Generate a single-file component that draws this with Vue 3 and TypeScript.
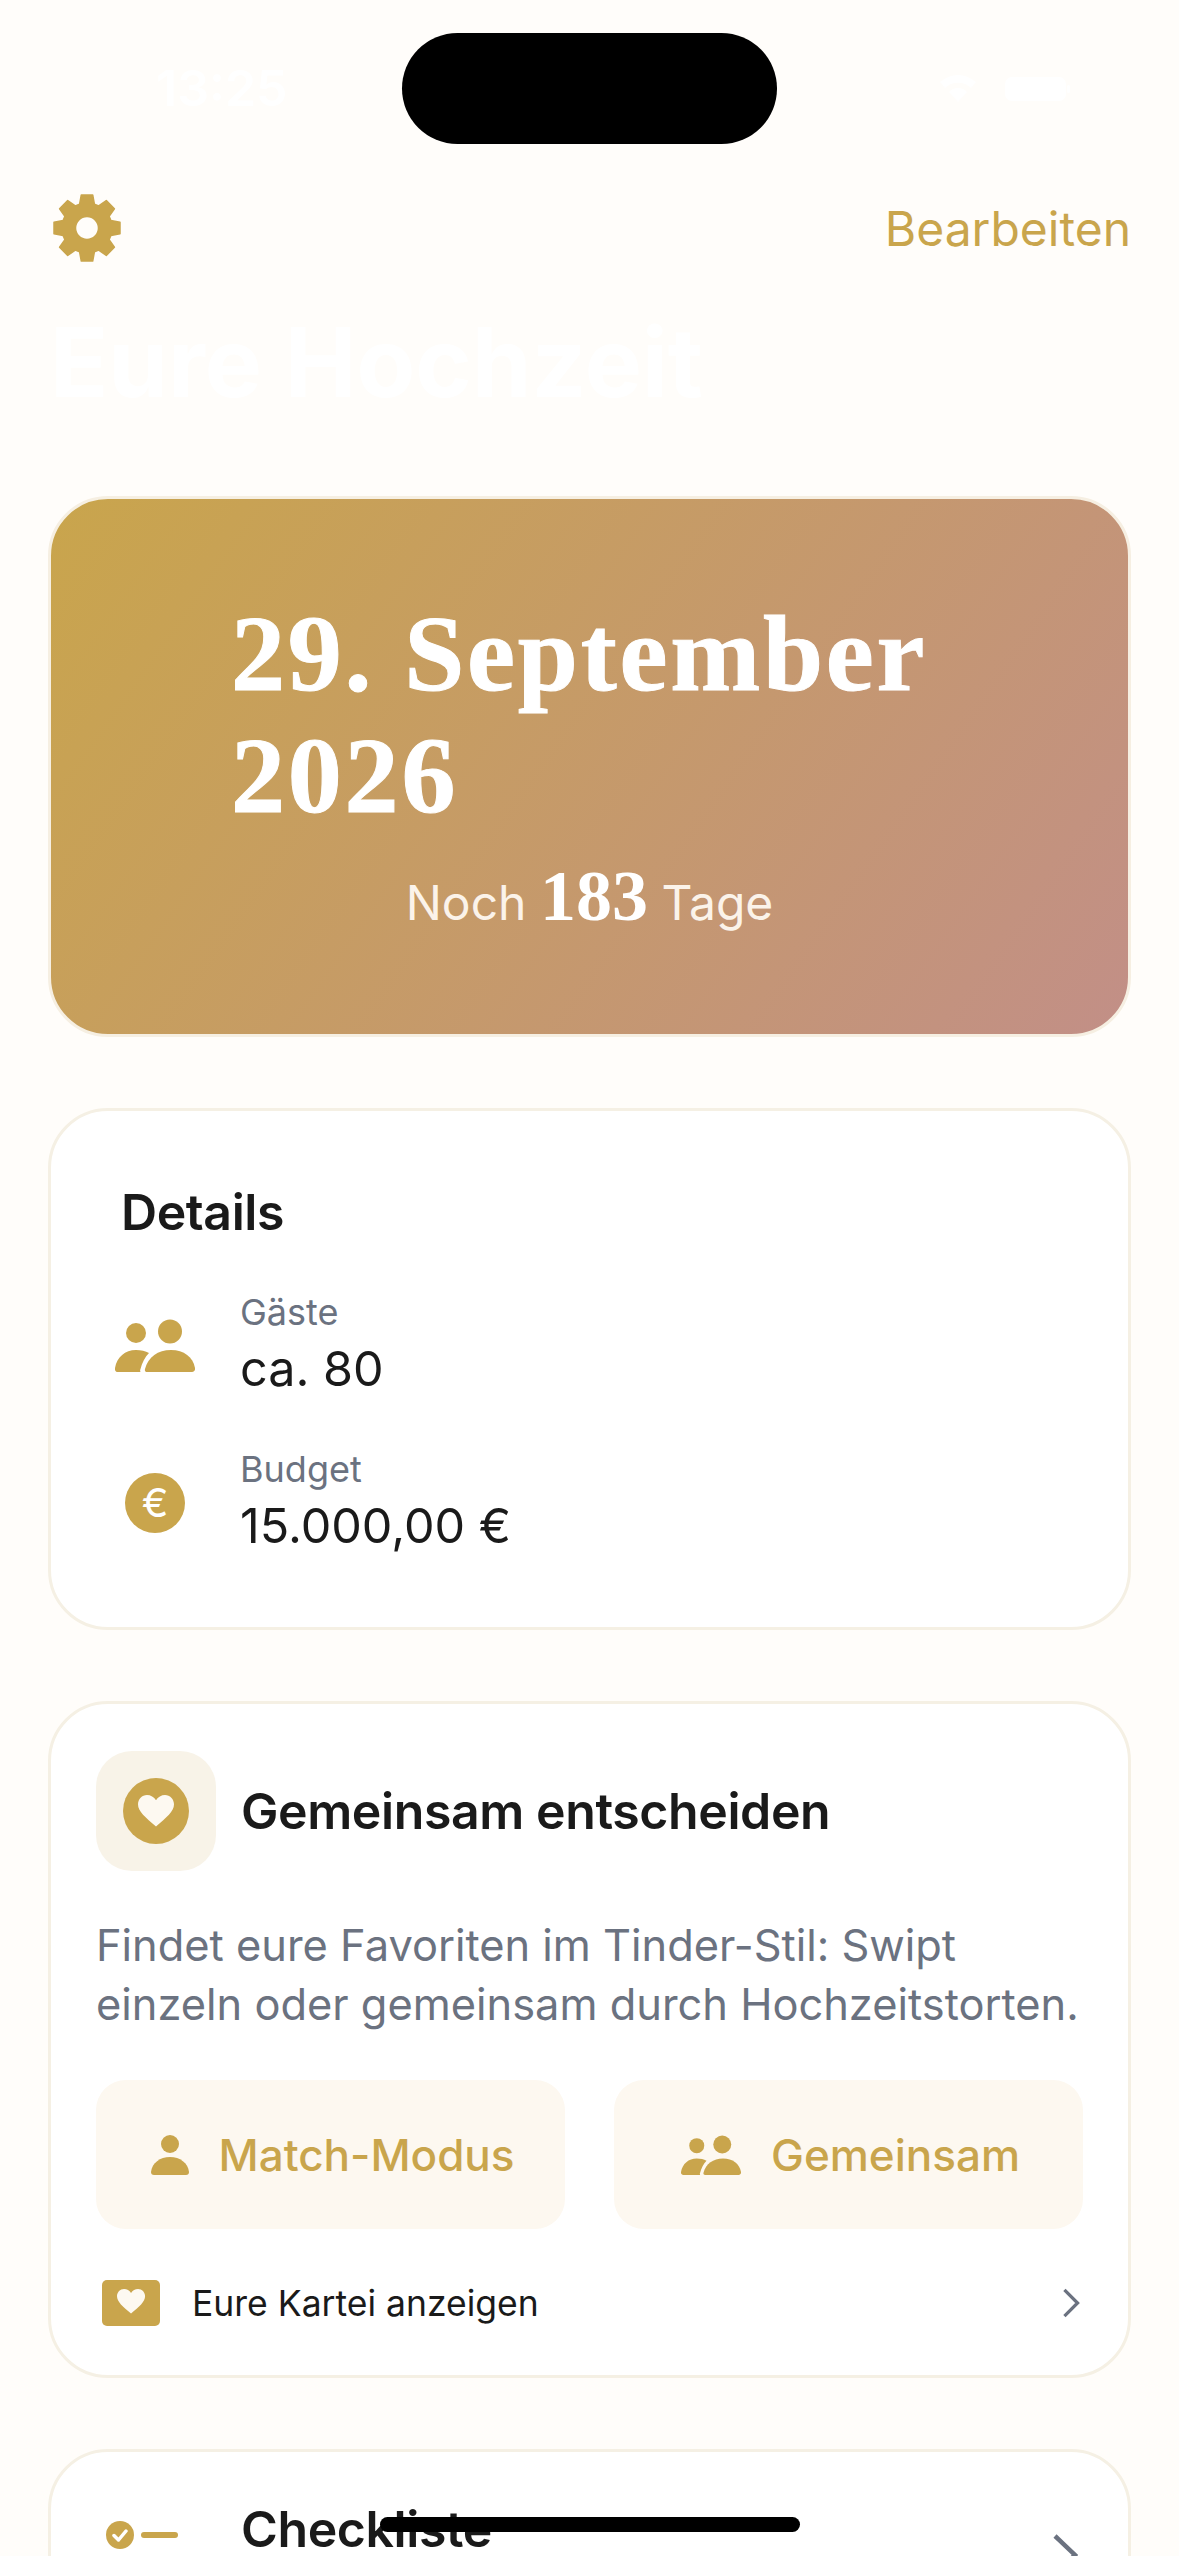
<template>
  <div class="screen">
    <!-- Statusleiste -->
    <div class="status-bar">
      <span class="status-time">13:25</span>
      <svg class="status-right" viewBox="0 0 130 30" aria-hidden="true">
        <path d="M0 8a27 27 0 0 1 36 0l-5 6a19 19 0 0 0-26 0ZM9 18a12 12 0 0 1 18 0l-9 10Z" />
        <rect x="65" y="3" width="61" height="24" rx="7" />
        <rect x="127" y="11" width="3" height="8" rx="1.5" />
      </svg>
    </div>
    <div class="island" />

    <div class="nav">
      <svg class="gear" viewBox="0 0 68 68" aria-hidden="true">
        <path :d="gearPath" fill-rule="evenodd" />
      </svg>
      <span class="edit">Bearbeiten</span>
    </div>

    <h1 class="page-title">Eure Hochzeit</h1>

    <section class="hero">
      <div class="hero-date">29. September 2026</div>
      <div class="hero-count">Noch <strong>183</strong> Tage</div>
    </section>

    <section class="card details">
      <h2>Details</h2>
      <div class="detail-row">
        <svg class="detail-icon" viewBox="0 0 80 53" aria-hidden="true">
          <circle cx="21" cy="14" r="10" />
          <circle cx="55" cy="12.5" r="12" />
          <path d="M3 53C.5 53-.5 51 0 49 2 38 10 31 21 31c5 0 9.500 1 13 3-4 4-7 10-8.500 16-.5 1-.5 2 0 3Z" />
          <path d="M32 53c-1.500 0-2.500-1-2-3 3-12 13-19 26-19s22 7 24 18c.4 2.500-1 4-3 4Z" />
        </svg>
        <div>
          <div class="detail-label">Gäste</div>
          <div class="detail-value">ca. 80</div>
        </div>
      </div>
      <div class="detail-row">
        <div class="detail-icon euro">€</div>
        <div>
          <div class="detail-label">Budget</div>
          <div class="detail-value">15.000,00 €</div>
        </div>
      </div>
    </section>

    <section class="card decide">
      <div class="decide-head">
        <div class="decide-icon">
          <svg viewBox="0 0 66 66" aria-hidden="true">
            <circle cx="33" cy="33" r="33" />
            <path class="white" :d="heartPath" transform="translate(15 17) scale(1.5)" />
          </svg>
        </div>
        <h2>Gemeinsam entscheiden</h2>
      </div>
      <p class="decide-text">
        Findet eure Favoriten im Tinder-Stil: Swipt einzeln oder gemeinsam durch Hochzeitstorten.
      </p>
      <div class="decide-buttons">
        <button class="mode-btn">
          <svg class="person" viewBox="0 0 38 40" aria-hidden="true">
            <circle cx="19" cy="9" r="9" />
            <path d="M3 40c-2 0-3-1-3-3 1-9 9-15 19-15s18 6 19 15c0 2-1 3-3 3Z" />
          </svg>
          Match-Modus
        </button>
        <button class="mode-btn">
          <svg class="people" viewBox="0 0 80 53" aria-hidden="true">
            <circle cx="21" cy="14" r="10" />
            <circle cx="55" cy="12.500" r="12" />
            <path d="M3 53C.5 53-.5 51 0 49 2 38 10 31 21 31c5 0 9.500 1 13 3-4 4-7 10-8.500 16-.5 1-.5 2 0 3Z" />
            <path d="M32 53c-1.500 0-2.500-1-2-3 3-12 13-19 26-19s22 7 24 18c.4 2.500-1 4-3 4Z" />
          </svg>
          Gemeinsam
        </button>
      </div>
      <div class="kartei">
        <svg class="kartei-icon" viewBox="0 0 58 46" aria-hidden="true">
          <rect width="58" height="46" rx="5" />
          <path class="white" :d="heartPath" transform="translate(15 9) scale(1.17)" />
        </svg>
        <span>Eure Kartei anzeigen</span>
        <svg class="chevron" viewBox="0 0 20 32" aria-hidden="true">
          <path d="M3 2l14 14L3 30" />
        </svg>
      </div>
    </section>

    <section class="card checklist">
      <div class="check-icon">
        <svg viewBox="0 0 72 28" aria-hidden="true">
          <circle cx="14" cy="14" r="14" />
          <path class="tick" d="M8 14.500l4.500 4.500L20 10" />
          <rect x="35" y="11" width="37" height="6" rx="3" />
        </svg>
      </div>
      <h2>Checkliste</h2>
      <svg class="chevron big" viewBox="0 0 26 44" aria-hidden="true">
        <path d="M3 3l20 19L3 41" />
      </svg>
    </section>

    <div class="home-indicator" />
  </div>
</template>

<script setup lang="ts">
// Zahnrad aus 8 Zähnen plus Loch in der Mitte
const buildGear = (): string => {
  const pts: string[] = []
  const cx = 34
  const cy = 34
  for (let i = 0; i < 8; i++) {
    const a = (i * Math.PI) / 4 - Math.PI / 2
    const corners: [number, number][] = [
      [25, -0.3],
      [33.5, -0.17],
      [33.5, 0.17],
      [25, 0.3]
    ]
    for (const [r, d] of corners) {
      pts.push(`${(cx + r * Math.cos(a + d)).toFixed(1)} ${(cy + r * Math.sin(a + d)).toFixed(1)}`)
    }
  }
  const hole = 'M45.500 34a11.500 11.500 0 1 0-23 0a11.500 11.500 0 1 0 23 0Z'
  return `M${pts.join('L')}Z${hole}`
}

const gearPath = buildGear()
const heartPath = 'M12 21C5 15 0 11 0 6.200 0 2.700 2.700 0 6 0c2.400 0 4.700 1.300 6 3.500C13.300 1.300 15.600 0 18 0c3.300 0 6 2.700 6 6.200C24 11 19 15 12 21Z'
</script>

<style>
html,
body {
  margin: 0;
  overflow: hidden;
  background: #fffdfa;
}
</style>

<style scoped>
.screen {
  position: relative;
  height: 2556px;
  overflow: hidden;
  box-sizing: border-box;
  padding: 0 48px;
  background: #fffdfa;
  font-family: Inter, "Noto Sans", sans-serif;
  color: #1a1a1a;
}

.status-bar {
  height: 180px;
  display: flex;
  justify-content: space-between;
  padding: 58px 61px 0 108px;
  box-sizing: border-box;
  color: #ffffff;
  font-size: 50px;
  font-weight: 600;
}

.status-right {
  width: 130px;
  height: 30px;
  margin-top: 16px;
  fill: #ffffff;
}

.island {
  position: absolute;
  left: 402px;
  top: 33px;
  width: 375px;
  height: 111px;
  border-radius: 56px;
  background: #000;
}

.nav {
  height: 96px;
  display: flex;
  align-items: center;
  justify-content: space-between;
}

.gear {
  width: 68px;
  height: 68px;
  margin-left: 5px;
  fill: #c9a54c;
  stroke: #c9a54c;
  stroke-width: 1.5;
  stroke-linejoin: round;
}

.edit {
  font-size: 48px;
  color: #c9a54c;
}

.page-title {
  margin: 26px 0 74px 2px;
  height: 120px;
  line-height: 120px;
  font-size: 96px;
  font-weight: 700;
  color: #ffffff;
}

.hero {
  height: 541px;
  box-sizing: border-box;
  border: 3px solid #f6efe2;
  border-radius: 60px;
  background: linear-gradient(125deg, #c9a54c 0%, #c28f87 100%);
  padding-top: 94px;
  color: #fff;
}

.hero-date {
  width: 717px;
  margin: 0 auto;
  font-family: "Liberation Serif", serif;
  font-size: 108px;
  line-height: 122px;
  font-weight: 700;
  letter-spacing: 2.8px;
  -webkit-text-stroke: 1px #fff;
}

.hero-count {
  margin-top: 18px;
  text-align: center;
  font-size: 48px;
  color: #fbf3ea;
}

.hero-count strong {
  font-family: "Liberation Serif", serif;
  font-size: 72px;
  font-weight: 700;
  color: #fff;
}

.card {
  box-sizing: border-box;
  border: 3px solid #f5f0e4;
  border-radius: 60px;
  background: #fff;
}

h2 {
  margin: 0;
  font-size: 50px;
  font-weight: 600;
  letter-spacing: -0.4px;
  color: #1a1a1a;
}

.details {
  margin-top: 71px;
  height: 522px;
  padding: 70px 0 0 70px;
}

.details h2 {
  line-height: 62px;
  margin-bottom: 48px;
}

.detail-row {
  display: flex;
  align-items: center;
  gap: 45px;
  margin: 0 0 48px -6px;
}

.detail-icon {
  width: 80px;
  height: 53px;
  fill: #c9a54c;
}

.euro {
  width: 60px;
  height: 60px;
  margin: 0 10px;
  border-radius: 50%;
  background: #c9a54c;
  color: #fff;
  font-size: 40px;
  line-height: 60px;
  text-align: center;
}

.detail-label {
  font-size: 36px;
  line-height: 42px;
  color: #6b7280;
}

.detail-value {
  font-size: 48.5px;
  line-height: 62px;
  color: #1a1a1a;
  margin-top: 5px;
}

.decide {
  margin-top: 71px;
  height: 677px;
  padding: 47px 45px 0;
}

.decide-head {
  display: flex;
  align-items: center;
  gap: 25px;
}

.decide-icon {
  width: 120px;
  height: 120px;
  border-radius: 36px;
  background: #f8f3e8;
  display: flex;
  align-items: center;
  justify-content: center;
}

.decide-icon svg {
  width: 66px;
  height: 66px;
  fill: #c9a54c;
}

svg .white {
  fill: #fdf9f1;
}

.decide-text {
  margin: 45px 0 46px;
  font-size: 43.4px;
  line-height: 59px;
  color: #6b7280;
}

.decide-buttons {
  display: flex;
  gap: 49px;
}

.mode-btn {
  flex: 1;
  height: 149px;
  display: flex;
  align-items: center;
  justify-content: center;
  gap: 30px;
  border: none;
  border-radius: 30px;
  padding: 0 0 0 4px;
  background: #fdf8f0;
  font-family: inherit;
  font-size: 44px;
  font-weight: 500;
  color: #c9a54c;
}

.person {
  width: 38px;
  height: 40px;
  fill: #c9a54c;
}

.people {
  width: 60px;
  height: 40px;
  fill: #c9a54c;
}

.kartei {
  display: flex;
  align-items: center;
  margin: 51px 0 0 6px;
  font-size: 35.5px;
  color: #1a1a1a;
}

.kartei-icon {
  width: 58px;
  height: 46px;
  margin-right: 32px;
  fill: #c9a54c;
}

.chevron {
  width: 20px;
  height: 30px;
  margin-left: auto;
  margin-right: 2px;
  fill: none;
  stroke: #6b7280;
  stroke-width: 3.5;
}

.checklist {
  margin-top: 71px;
  height: 320px;
  padding: 47px 48px 0 55px;
  display: flex;
  align-items: flex-start;
}

.check-icon {
  width: 135px;
  height: 28px;
  margin-top: 22px;
  flex: none;
  display: flex;
}

.check-icon svg {
  width: 72px;
  height: 28px;
  fill: #c9a54c;
}

svg .tick {
  fill: none;
  stroke: #fff;
  stroke-width: 3.5;
  stroke-linecap: round;
  stroke-linejoin: round;
}

.chevron.big {
  width: 26px;
  height: 44px;
  stroke-width: 4.500;
  margin-top: 34px;
}

.home-indicator {
  position: absolute;
  left: 380px;
  top: 2517px;
  width: 420px;
  height: 15px;
  border-radius: 8px;
  background: #000;
}
</style>
